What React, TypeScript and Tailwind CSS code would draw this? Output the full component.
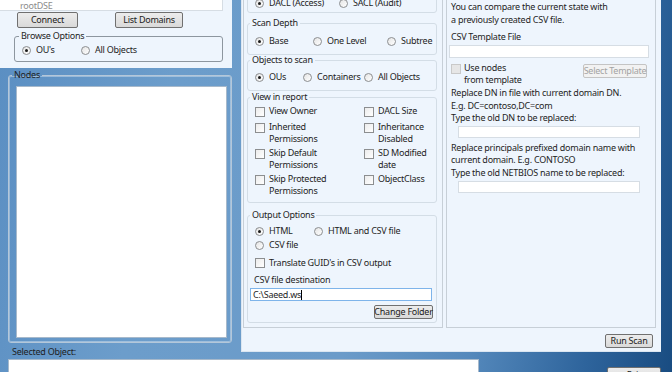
import React from "react";

function Radio(props: { label: string; checked?: boolean; className?: string }) {
  return (
    <span className={`flex items-center gap-[5px] h-[12px] ${props.className ?? ""}`}>
      <span className="flex items-center justify-center w-[9px] h-[9px] shrink-0 rounded-full border border-[#8c8e90] bg-[linear-gradient(135deg,#e4e4e4,#ffffff)]">
        {props.checked && <span className="w-[3px] h-[3px] rounded-full bg-[#1a1a1a]" />}
      </span>
      <span className="whitespace-nowrap">{props.label}</span>
    </span>
  );
}

function Check(props: { disabled?: boolean }) {
  return (
    <span
      className={`block w-[10px] h-[10px] shrink-0 border ${
        props.disabled
          ? "border-[#c9c9c9] bg-[#e6e6e6]"
          : "border-[#8c8e90] bg-[linear-gradient(135deg,#ececec,#ffffff)]"
      }`}
    />
  );
}

function CheckItem(props: { lines: string[] }) {
  return (
    <div className="flex items-start gap-[4px]">
      <span className="mt-[2px]">
        <Check />
      </span>
      <div className="leading-[12px] whitespace-nowrap">
        {props.lines.map((l) => (
          <div key={l}>{l}</div>
        ))}
      </div>
    </div>
  );
}

function Group(props: { title: string; className?: string; children: React.ReactNode }) {
  return (
    <fieldset className={`rounded-[3px] border border-[#d3dde6] ${props.className ?? ""}`}>
      <legend className="ml-[2px] px-[2px] leading-[10px] text-[#1e1e1e]">{props.title}</legend>
      {props.children}
    </fieldset>
  );
}

function Btn(props: { label: string; className?: string; disabled?: boolean }) {
  return (
    <div
      className={`flex items-center justify-center rounded-[2px] border whitespace-nowrap ${
        props.disabled
          ? "border-[#c4c4c4] bg-[#f2f2f2] text-[#a3a3a3]"
          : "border-[#707070] bg-[linear-gradient(#ececec,#d9d9d9)] text-[#1b1b1b]"
      } ${props.className ?? ""}`}
    >
      {props.label}
    </div>
  );
}

export default function App() {
  return (
    <div className="flex flex-col w-[672px] h-[372px] overflow-hidden font-['Noto_Sans',sans-serif] text-[9px] tracking-[-0.25px] text-[#1e1e1e] bg-[linear-gradient(100deg,#5a8ec2_0%,#6c9dcb_25%,#6b9bc9_55%,#5589bc_72%,#2e649c_88%,#194c81_100%)]">
      <div className="flex items-start h-[358px] shrink-0">
        {/* Left column */}
        <div className="w-[240px] shrink-0">
          <div className="w-[232px] h-[68px] bg-[#eef5fd]">
            <div className="w-[223px] h-[11px] pl-[20px] bg-white border-r border-b border-[#d6dde4] text-[#8b8b8b] leading-[11px]">
              rootDSE
            </div>
            <div className="flex mt-[1px]">
              <Btn label="Connect" className="ml-[17px] w-[61px] h-[16px]" />
              <Btn label="List Domains" className="ml-[37px] w-[68px] h-[16px]" />
            </div>
            <fieldset className="ml-[14px] mt-[3px] w-[209px] rounded-[3px] border border-[#8d969f]">
              <legend className="ml-[4px] px-[2px] leading-[10px]">Browse Options</legend>
              <div className="flex pl-[7px] mt-[3px] mb-[5px]">
                <Radio label="OU's" checked className="w-[59px]" />
                <Radio label="All Objects" />
              </div>
            </fieldset>
          </div>
          <fieldset className="ml-[8px] mt-[2px] w-[224px] rounded-[3px] border border-[#b4c7d9] shadow-[inset_0_0_0_1px_rgba(255,255,255,0.35)]">
            <legend className="ml-[3px] px-[2px] leading-[10px]">Nodes</legend>
            <div className="ml-[7px] mr-[4px] mt-[6px] mb-[4px] h-[252px] bg-white border border-[#a7b9cb]" />
          </fieldset>
          <div className="ml-[12px] mt-[3px] leading-[12px]">Selected Object:</div>
        </div>

        {/* Middle panel */}
        <div className="ml-[1px] w-[420px] h-[352px] shrink-0 overflow-hidden bg-[#eef5fd] border-l border-b border-[#dbe6f1]">
          <div className="flex gap-[3px] pl-[1px] pr-[5px] -mt-[4px]">
            {/* Scan options */}
            <div className="w-[200px] h-[332px] pl-[3px] pr-[5px] border border-[#c7cfd7]">
              <div className="-mt-[17px] pt-[16px] pb-[3px] rounded-[3px] border border-[#d3dde6]">
                <div className="flex pl-[7px]">
                  <Radio label="DACL (Access)" checked className="w-[84px]" />
                  <Radio label="SACL (Audit)" />
                </div>
              </div>
              <Group title="Scan Depth" className="mt-[5px]">
                <div className="flex pl-[7px] mt-[7px] mb-[7px]">
                  <Radio label="Base" checked className="w-[58px]" />
                  <Radio label="One Level" className="w-[74px]" />
                  <Radio label="Subtree" />
                </div>
              </Group>
              <Group title="Objects to scan">
                <div className="flex pl-[7px] mt-[6px] mb-[7px]">
                  <Radio label="OUs" checked className="w-[48px]" />
                  <Radio label="Containers" className="w-[61px]" />
                  <Radio label="All Objects" />
                </div>
              </Group>
              <Group title="View in report" className="mt-[1px]">
                <div className="grid grid-cols-[109px_1fr] grid-rows-[16px_26px_26px_26px] pl-[7px] mt-[3px] mb-[3px]">
                  <CheckItem lines={["View Owner"]} />
                  <CheckItem lines={["DACL Size"]} />
                  <CheckItem lines={["Inherited", "Permissions"]} />
                  <CheckItem lines={["Inheritance", "Disabled"]} />
                  <CheckItem lines={["Skip Default", "Permissions"]} />
                  <CheckItem lines={["SD Modified", "date"]} />
                  <CheckItem lines={["Skip Protected", "Permissions"]} />
                  <CheckItem lines={["ObjectClass"]} />
                </div>
              </Group>
              <Group title="Output Options" className="mt-[7px]">
                <div className="flex pl-[7px] mt-[5px]">
                  <Radio label="HTML" checked className="w-[59px]" />
                  <Radio label="HTML and CSV file" />
                </div>
                <div className="flex pl-[7px] mt-[2px]">
                  <Radio label="CSV file" />
                </div>
                <div className="flex items-center gap-[4px] pl-[7px] mt-[6px] h-[12px]">
                  <Check />
                  <span>Translate GUID's in CSV output</span>
                </div>
                <div className="pl-[6px] mt-[5px] leading-[12px]">CSV file destination</div>
                <div className="flex items-center ml-[2px] mt-[2px] w-[182px] h-[13px] pl-[2px] bg-white border border-[#7eb4ea]">
                  <span>C:\Saeed.ws</span>
                  <span className="w-px h-[10px] bg-black" />
                </div>
                <div className="flex justify-end mr-[3px] mt-[4px] mb-[3px]">
                  <Btn label="Change Folder" className="w-[59px] h-[14px]" />
                </div>
              </Group>
            </div>

            {/* Compare options */}
            <div className="w-[210px] h-[332px] border border-[#c7cfd7]">
              <div className="pl-[4px] pt-[3px] leading-[13px]">
                <div>You can compare the current state with</div>
                <div>a previously created CSV file.</div>
              </div>
              <div className="pl-[4px] mt-[4px] leading-[13px]">CSV Template File</div>
              <div className="ml-[2px] mt-[2px] w-[200px] h-[13px] bg-white border border-[#d6dde4]" />
              <div className="flex items-start mt-[4px]">
                <span className="ml-[4px] mt-[2px]">
                  <Check disabled />
                </span>
                <div className="ml-[3px] leading-[12px]">
                  <div>Use nodes</div>
                  <div>from template</div>
                </div>
                <Btn label="Select Template" disabled className="ml-auto mr-[8px] mt-[2px] w-[64px] h-[14px]" />
              </div>
              <div className="pl-[4px] mt-[1px] leading-[12.5px]">
                <div>Replace DN in file with current domain DN.</div>
                <div>E.g. DC=contoso,DC=com</div>
                <div>Type the old DN to be replaced:</div>
              </div>
              <div className="ml-[11px] mt-[1px] w-[182px] h-[12px] bg-white border border-[#d6dde4]" />
              <div className="pl-[4px] mt-[4px] leading-[12.5px]">
                <div>Replace principals prefixed domain name with</div>
                <div>current domain. E.g. CONTOSO</div>
                <div>Type the old NETBIOS name to be replaced:</div>
              </div>
              <div className="ml-[11px] mt-[2px] w-[182px] h-[12px] bg-white border border-[#d6dde4]" />
            </div>
          </div>
          <div className="flex justify-end mr-[8px] mt-[6px]">
            <Btn label="Run Scan" className="w-[48px] h-[14px]" />
          </div>
        </div>
      </div>

      {/* Bottom row */}
      <div className="flex items-start">
        <div className="ml-[8px] mt-[1px] w-[471px] h-[30px] bg-white border border-[#a7b9cb]" />
        <Btn label="Exit" className="ml-[128px] mt-[9px] w-[54px] h-[16px]" />
      </div>
    </div>
  );
}
